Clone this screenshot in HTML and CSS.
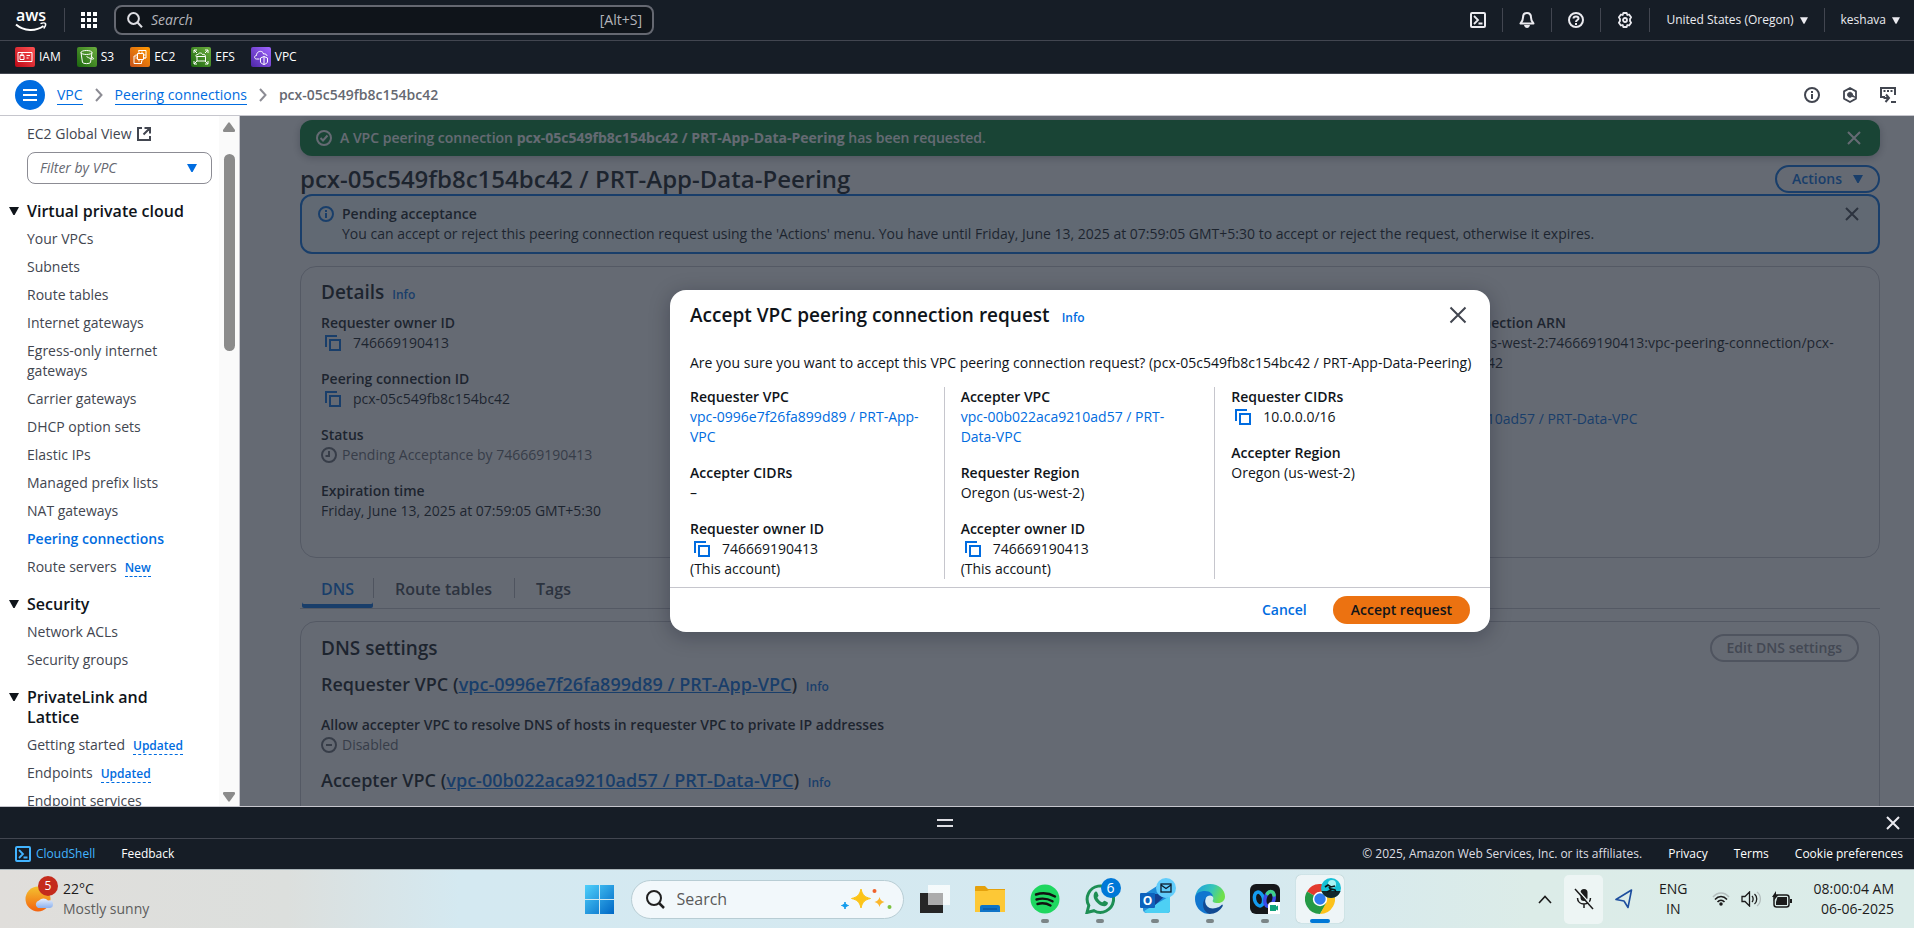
FILE: index.html
```html
<!DOCTYPE html>
<html lang="en">
<head>
<meta charset="utf-8">
<title>Peering connections | VPC Console</title>
<link rel="stylesheet" href="styles.css">
</head>
<body>
<svg class="sprite" aria-hidden="true">
  <symbol id="i-close" viewBox="0 0 16 16"><path d="m2 2 12 12M14 2 2 14" fill="none" stroke="currentColor" stroke-width="2"/></symbol>
  <symbol id="i-copy" viewBox="0 0 16 16"><path d="M1 12V1h11M5 5h10v10H5z" fill="none" stroke="currentColor" stroke-width="2"/></symbol>
  <symbol id="i-caret" viewBox="0 0 10 8"><path d="M0 0h10L5.600 8H4.400z" fill="currentColor"/></symbol>
  <symbol id="i-info" viewBox="0 0 16 16"><circle cx="8" cy="8" r="7" fill="none" stroke="currentColor" stroke-width="2"/><path d="M8 7v5M8 4v2" stroke="currentColor" stroke-width="2"/></symbol>
  <symbol id="i-shell" viewBox="0 0 16 16"><rect x="1" y="1" width="14" height="14" rx="1" fill="none" stroke="currentColor" stroke-width="2"/><path d="m4 4 4 4-4 4M8.500 11.500h4" fill="none" stroke="currentColor" stroke-width="1.800"/></symbol>
  <symbol id="i-chev" viewBox="0 0 8 14"><path d="m1 1 5.500 6L1 13" fill="none" stroke="currentColor" stroke-width="2"/></symbol>
  <symbol id="i-search" viewBox="0 0 16 16"><circle cx="6.500" cy="6.500" r="5.400" fill="none" stroke="currentColor" stroke-width="2"/><path d="m10.300 10.300 4.700 5" stroke="currentColor" stroke-width="2"/></symbol>
</svg>

<header class="topbar">
  <div class="topbar-row">
    <a class="logo" href="#" aria-label="AWS home">
      <svg width="32" height="26" viewBox="0 -2 32 26"><text x="16" y="12" text-anchor="middle" class="logo-text">aws</text><path d="M1 15.500c8 7 20 7 27.500 1.500" fill="none" stroke="#fff" stroke-width="2"/><path d="M25.500 14.600c2-.9 4.500-.9 5 0 .4 1.200-.5 3.400-1.800 4.900" fill="none" stroke="#fff" stroke-width="1.500"/></svg>
    </a>
    <span class="vrule"></span>
    <button class="icon-btn apps" aria-label="Services"><svg width="18" height="16" viewBox="0 0 18 16" fill="#fff"><path d="M1 0h4v4H1zM7 0h4v4H7zM13 0h4v4h-4zM1 6h4v4H1zM7 6h4v4H7zM13 6h4v4h-4zM1 12h4v4H1zM7 12h4v4H7zM13 12h4v4h-4z"/></svg></button>
    <label class="topsearch">
      <svg width="16" height="16"><use href="#i-search"/></svg>
      <input type="text" placeholder="Search" aria-label="Search">
      <span>[Alt+S]</span>
    </label>
    <div class="topright">
      <button class="icon-btn" aria-label="CloudShell"><svg width="16" height="16"><use href="#i-shell"/></svg></button>
      <span class="vrule"></span>
      <button class="icon-btn" aria-label="Notifications"><svg width="16" height="16" viewBox="0 0 16 16"><path d="M8 1C5.200 1 4 3 4 5.500 4 8.500 3 9.500 1.500 11.500h13C13 9.500 12 8.500 12 5.500 12 3 10.800 1 8 1z" fill="none" stroke="currentColor" stroke-width="2" stroke-linejoin="round"/><path d="M5 13h6c-.5 2-1.500 3-3 3s-2.500-1-3-3z" fill="currentColor"/></svg></button>
      <span class="vrule"></span>
      <button class="icon-btn" aria-label="Help"><svg width="16" height="16" viewBox="0 0 16 16" fill="none" stroke="currentColor" stroke-width="2"><circle cx="8" cy="8" r="7"/><path d="M5.500 6.500C5.500 5 6.500 4.400 8 4.400s2.500.8 2.500 2.100C10.500 8 8 8 8 10M8 11v2"/></svg></button>
      <span class="vrule"></span>
      <button class="icon-btn" aria-label="Settings"><svg width="16" height="16" viewBox="0 0 16 16" fill="none" stroke="currentColor" stroke-width="1.800"><path d="M6.300 1h3.400l.6 2 1.800-.5 2 2.800L13 7v2l1.100 1.700-2 2.800-1.800-.5-.6 2H6.300l-.6-2-1.800.5-2-2.800L3 9V7L1.900 5.300l2-2.800 1.800.5z" stroke-linejoin="round"/><circle cx="8" cy="8" r="2"/></svg></button>
      <span class="vrule"></span>
      <button class="menu-btn">United States (Oregon) <svg width="8" height="7"><use href="#i-caret"/></svg></button>
      <span class="vrule"></span>
      <button class="menu-btn">keshava <svg width="8" height="7"><use href="#i-caret"/></svg></button>
    </div>
  </div>
  <nav class="favorites" aria-label="Favorites">
    <a href="#"><svg class="iam" viewBox="0 0 20 20"><path d="M3 5.500h14v9H3zM5 8.500h4v4H5zM6 8.500V7h2v1.500M11.500 8.500H15M11.500 11h2"/></svg>IAM</a>
    <a href="#"><svg class="s3" viewBox="0 0 20 20"><ellipse cx="9.500" cy="5.500" rx="5.500" ry="2"/><path d="m4 5.500 1.500 10c1 1.500 7 1.500 8 0L15 5.500M9.500 9.500c3 2 6 3 7 2.500.5-.8-1-1.800-2.500-2.600"/></svg>S3</a>
    <a href="#"><svg class="ec2" viewBox="0 0 20 20"><path d="M7.500 6.500h6v6h-6zM9 4.500v2M12 4.500v2M9 12.500v2M12 12.500v2M5.500 8h2M5.500 11h2M13.500 8h2M13.500 11h2M8.500 4.500V3.500H16V11h-2M6.500 9H4v7.500h7.500V14"/></svg>EC2</a>
    <a href="#"><svg class="s3" viewBox="0 0 20 20"><path d="M3 6V3h3M14 3h3v3M17 14v3h-3M6 17H3v-3M3 3l3 3M17 3l-3 3M17 17l-3-3M3 17l3-3M6 14h8.500V9.500H6zM6 10c-2-.5-1-3 1-2.500.5-2 4-2 4.500 0 2-.5 3 .5 3 2"/></svg>EFS</a>
    <a href="#"><svg class="vpc" viewBox="0 0 20 20"><path d="M8.500 12H5.500C3 12 3 8.500 5.500 8.500 5.500 3.500 12 3 12.500 7c2-.5 3.500.5 3.500 2M13 9.500l3.500 1.500v4c0 1-2 2-3.500 2.500-1.500-.5-3.500-1.500-3.500-2.500v-4zM13 9.500v8"/></svg>VPC</a>
  </nav>
</header>

<div class="crumbbar">
  <button class="burger" aria-label="Open navigation"><svg width="14" height="12" viewBox="0 0 14 12"><path d="M0 1h14M0 6h14M0 11h14" stroke="#fff" stroke-width="2"/></svg></button>
  <nav class="crumbs" aria-label="Breadcrumbs">
    <a href="#">VPC</a><svg width="8" height="14"><use href="#i-chev"/></svg>
    <a href="#">Peering connections</a><svg width="8" height="14"><use href="#i-chev"/></svg>
    <b>pcx-05c549fb8c154bc42</b>
  </nav>
  <div class="crumb-tools">
    <button class="icon-btn" aria-label="Info panel"><svg width="16" height="16"><use href="#i-info"/></svg></button>
    <button class="icon-btn" aria-label="Diagnostics"><svg width="16" height="16" viewBox="0 0 16 16"><path d="M8 1l6 3.400v7.200L8 15l-6-3.400V4.400z" fill="none" stroke="currentColor" stroke-width="1.800" stroke-linejoin="round"/><path d="M9.500 9.800A2.500 2.500 0 1 1 10.500 8l3.500 3" fill="currentColor" stroke="currentColor" stroke-width="1"/></svg></button>
    <button class="icon-btn" aria-label="Open in CloudShell"><svg width="16" height="16" viewBox="0 0 16 16" fill="none" stroke="currentColor" stroke-width="2"><path d="M5 10H1V1h14v7M3.500 4h2M7 4h2M10.500 4h2M3.500 11H9M6 7.500 9 11l-3.500 4M11 15h5"/></svg></button>
  </div>
</div>

<div class="workspace">
  <aside class="sidebar">
    <nav class="sidenav" aria-label="VPC">
      <a href="#" class="ext">EC2 Global View <svg width="14" height="14" viewBox="0 0 14 14" fill="none" stroke="currentColor" stroke-width="2"><path d="M5 1H1v12h12V9M7.500 1H13v5.500M13 1 6.500 7.500"/></svg></a>
      <div class="filter"><select aria-label="Filter by VPC"><option>Filter by VPC</option></select><svg width="10" height="8"><use href="#i-caret"/></svg></div>
      <section>
        <button class="group"><svg width="10" height="8"><use href="#i-caret"/></svg>Virtual private cloud</button>
        <ul>
          <li><a href="#">Your VPCs</a></li>
          <li><a href="#">Subnets</a></li>
          <li><a href="#">Route tables</a></li>
          <li><a href="#">Internet gateways</a></li>
          <li><a href="#">Egress-only internet gateways</a></li>
          <li><a href="#">Carrier gateways</a></li>
          <li><a href="#">DHCP option sets</a></li>
          <li><a href="#">Elastic IPs</a></li>
          <li><a href="#">Managed prefix lists</a></li>
          <li><a href="#">NAT gateways</a></li>
          <li><a href="#" class="current">Peering connections</a></li>
          <li><a href="#">Route servers</a><button class="tag">New</button></li>
        </ul>
      </section>
      <section>
        <button class="group"><svg width="10" height="8"><use href="#i-caret"/></svg>Security</button>
        <ul>
          <li><a href="#">Network ACLs</a></li>
          <li><a href="#">Security groups</a></li>
        </ul>
      </section>
      <section>
        <button class="group"><svg width="10" height="8"><use href="#i-caret"/></svg>PrivateLink and Lattice</button>
        <ul>
          <li><a href="#">Getting started</a><button class="tag">Updated</button></li>
          <li><a href="#">Endpoints</a><button class="tag">Updated</button></li>
          <li><a href="#">Endpoint services</a></li>
        </ul>
      </section>
    </nav>
    <div class="scrollbar" aria-hidden="true">
      <svg width="12" height="10" viewBox="0 0 12 10"><path d="M5 1Q6-.3 7 1l5 7q.2 2-1 2H1Q-.2 10 0 8z" fill="#8b8b8b"/></svg>
      <div class="track"><div class="thumb"></div></div>
      <svg width="12" height="10" viewBox="0 0 12 10"><path d="M5 9q1 1.300 2 0l5-7q.2-2-1-2H1Q-.2 0 0 2z" fill="#8b8b8b"/></svg>
    </div>
  </aside>

  <div class="stage">
    <main class="content">
      <div class="flash">
        <svg width="16" height="16" viewBox="0 0 16 16" fill="none" stroke="currentColor" stroke-width="2"><circle cx="8" cy="8" r="7"/><path d="m4.500 8 2.500 2.500L11.500 5.500"/></svg>
        <p>A VPC peering connection <b>pcx-05c549fb8c154bc42 / PRT-App-Data-Peering</b> has been requested.</p>
        <button class="icon-btn" aria-label="Dismiss"><svg width="16" height="16"><use href="#i-close"/></svg></button>
      </div>
      <div class="titlebar">
        <h1>pcx-05c549fb8c154bc42 / PRT-App-Data-Peering</h1>
        <button class="pill">Actions <svg width="10" height="8"><use href="#i-caret"/></svg></button>
      </div>
      <div class="alert">
        <svg class="blue" width="16" height="16"><use href="#i-info"/></svg>
        <div><b>Pending acceptance</b><p>You can accept or reject this peering connection request using the 'Actions' menu. You have until Friday, June 13, 2025 at 07:59:05 GMT+5:30 to accept or reject the request, otherwise it expires.</p></div>
        <button class="icon-btn" aria-label="Dismiss"><svg width="16" height="16"><use href="#i-close"/></svg></button>
      </div>
      <section class="card">
        <div class="card-head"><h2>Details</h2><a class="info" href="#">Info</a></div>
        <div class="details">
          <dl>
            <div><dt>Requester owner ID</dt><dd class="copy"><button aria-label="Copy"><svg width="16" height="16"><use href="#i-copy"/></svg></button>746669190413</dd></div>
            <div><dt>Peering connection ID</dt><dd class="copy"><button aria-label="Copy"><svg width="16" height="16"><use href="#i-copy"/></svg></button>pcx-05c549fb8c154bc42</dd></div>
            <div><dt>Status</dt><dd class="status"><svg width="16" height="16" viewBox="0 0 16 16" fill="none" stroke="currentColor" stroke-width="2"><circle cx="8" cy="8" r="7"/><path d="M8 4v5H4.500"/></svg>Pending Acceptance by 746669190413</dd></div>
            <div><dt>Expiration time</dt><dd>Friday, June 13, 2025 at 07:59:05 GMT+5:30</dd></div>
          </dl>
          <dl></dl>
          <dl>
            <div><dt>VPC peering connection ARN</dt><dd class="arn"><button aria-label="Copy"><svg width="16" height="16"><use href="#i-copy"/></svg></button>arn:aws:ec2:us-west-2:746669190413:vpc-peering-connection/pcx-05c549fb8c154bc42</dd></div>
            <div><dt>Accepter VPC</dt><dd><a href="#">vpc-00b022aca9210ad57 / PRT-Data-VPC</a></dd></div>
            <div><dt>Accepter CIDRs</dt><dd>–</dd></div>
            <div><dt>Accepter Region</dt><dd>Oregon</dd></div>
          </dl>
        </div>
      </section>
      <div class="tabs" role="tablist">
        <button role="tab" aria-selected="true">DNS</button>
        <button role="tab" aria-selected="false">Route tables</button>
        <button role="tab" aria-selected="false">Tags</button>
      </div>
      <section class="card dns">
        <div class="card-head"><h2>DNS settings</h2><button class="pill" disabled>Edit DNS settings</button></div>
        <h3>Requester VPC (<a href="#">vpc-0996e7f26fa899d89 / PRT-App-VPC</a>) <a class="info" href="#">Info</a></h3>
        <dl><dt>Allow accepter VPC to resolve DNS of hosts in requester VPC to private IP addresses</dt><dd class="status"><svg width="16" height="16" viewBox="0 0 16 16" fill="none" stroke="currentColor" stroke-width="2"><circle cx="8" cy="8" r="7"/><path d="M5 8h6"/></svg>Disabled</dd></dl>
        <h3>Accepter VPC (<a href="#">vpc-00b022aca9210ad57 / PRT-Data-VPC</a>) <a class="info" href="#">Info</a></h3>
      </section>
    </main>

    <div class="overlay">
      <div class="modal" role="dialog" aria-labelledby="modal-title">
        <div class="modal-head">
          <h2 id="modal-title">Accept VPC peering connection request</h2><a class="info" href="#">Info</a>
          <button class="icon-btn" aria-label="Close"><svg width="18" height="18" viewBox="0 0 18 18"><path d="m1.500 1.500 15 15M16.500 1.500l-15 15" stroke="currentColor" stroke-width="2"/></svg></button>
        </div>
        <div class="modal-body">
          <p>Are you sure you want to accept this VPC peering connection request? (pcx-05c549fb8c154bc42 / PRT-App-Data-Peering)</p>
          <div class="modal-cols">
            <dl>
              <div><dt>Requester VPC</dt><dd><a href="#">vpc-0996e7f26fa899d89 / PRT-App-VPC</a></dd></div>
              <div><dt>Accepter CIDRs</dt><dd>–</dd></div>
              <div><dt>Requester owner ID</dt><dd class="copy"><button aria-label="Copy"><svg width="16" height="16"><use href="#i-copy"/></svg></button>746669190413</dd><dd>(This account)</dd></div>
            </dl>
            <dl>
              <div><dt>Accepter VPC</dt><dd><a href="#">vpc-00b022aca9210ad57 / PRT-Data-VPC</a></dd></div>
              <div><dt>Requester Region</dt><dd>Oregon (us-west-2)</dd></div>
              <div><dt>Accepter owner ID</dt><dd class="copy"><button aria-label="Copy"><svg width="16" height="16"><use href="#i-copy"/></svg></button>746669190413</dd><dd>(This account)</dd></div>
            </dl>
            <dl>
              <div><dt>Requester CIDRs</dt><dd class="copy"><button aria-label="Copy"><svg width="16" height="16"><use href="#i-copy"/></svg></button>10.0.0.0/16</dd></div>
              <div><dt>Accepter Region</dt><dd>Oregon (us-west-2)</dd></div>
            </dl>
          </div>
        </div>
        <div class="modal-foot">
          <button class="text-btn">Cancel</button>
          <button class="primary">Accept request</button>
        </div>
      </div>
    </div>
  </div>
</div>

<div class="drawer">
  <svg width="16" height="8" viewBox="0 0 16 8"><path d="M0 1h16M0 7h16" stroke="#dedee3" stroke-width="2"/></svg>
  <button class="icon-btn" aria-label="Close panel"><svg width="16" height="16"><use href="#i-close"/></svg></button>
</div>
<footer class="footer">
  <button class="shell"><svg width="16" height="16"><use href="#i-shell"/></svg>CloudShell</button>
  <a href="#">Feedback</a>
  <span class="copyright">© 2025, Amazon Web Services, Inc. or its affiliates.</span>
  <a href="#">Privacy</a>
  <a href="#">Terms</a>
  <a href="#">Cookie preferences</a>
</footer>

<div class="taskbar">
  <div class="weather">
    <div class="weather-icon">
      <svg width="30" height="30" viewBox="0 0 30 30"><defs><linearGradient id="sun" x2="0" y2="1"><stop stop-color="#f3c230"/><stop offset="1" stop-color="#f4620f"/></linearGradient><linearGradient id="cloud" x2="0" y2="1"><stop stop-color="#e8f0fd"/><stop offset="1" stop-color="#8db2ee"/></linearGradient></defs><circle cx="13" cy="15" r="12.500" fill="url(#sun)"/><path d="M13 24a4 4 0 0 1 1-7.500 6 6 0 0 1 9 0q5-1 5 4 0 3-3 3.500z" fill="url(#cloud)"/></svg>
      <span class="badge">5</span>
    </div>
    <div><div>22°C</div><div class="muted">Mostly sunny</div></div>
  </div>
  <div class="apps-row">
    <button class="app" aria-label="Start"><svg width="30" height="30" viewBox="0 0 30 30"><defs><linearGradient id="win" x2="1" y2="1"><stop stop-color="#4fd0fb"/><stop offset="1" stop-color="#0067c5"/></linearGradient></defs><path fill="url(#win)" d="M0 1h14v14H0zM15 1h14v14H15zM0 16h14v14H0zM15 16h14v14H15z"/></svg></button>
    <label class="tasksearch"><svg width="19" height="19" viewBox="0 0 19 19" fill="none" stroke="#202020" stroke-width="2"><circle cx="8" cy="8" r="7"/><path d="m13 13 5 5" stroke-width="2.500"/></svg><input type="text" placeholder="Search" aria-label="Search Windows">
      <svg width="52" height="26" viewBox="0 0 52 26"><path d="M20 3c1.500 6 3.500 8 9.500 9.500C23.500 14 21.500 16 20 22c-1.500-6-3.500-8-9.500-9.500C16.500 11 18.500 9 20 3z" fill="#fcc419" stroke="#fcc419" stroke-linejoin="round"/><path d="M38.500 11c.8 3 2 4.200 5 5-3 .8-4.200 2-5 5-.8-3-2-4.200-5-5 3-.8 4.200-2 5-5z" fill="#fbb62c"/><path d="M4 16c.6 2.200 1.300 3 3.500 3.500C5.300 20 4.600 20.800 4 23 3.400 20.800 2.700 20 .5 19.500 2.700 19 3.400 18.200 4 16z" fill="#149ded" stroke="#149ded"/><circle cx="33.500" cy="5" r="2" fill="#f0622d"/><circle cx="48.500" cy="21" r="2" fill="#7cc23f"/></svg></label>
    <button class="app" aria-label="Task view"><svg width="30" height="30" viewBox="0 0 30 30"><path d="M0 9h23v20H0z" fill="#262626"/><path d="M8 1h22v20H8z" fill="#fff" fill-opacity=".75"/><path d="M8 9h15v12H8z" fill="#999" fill-opacity=".6"/></svg></button>
    <button class="app" aria-label="File Explorer"><svg width="30" height="30" viewBox="0 0 30 30"><path d="M0 3q0-1 1-1h9l3 3h17v5H0z" fill="#e5a10c"/><path d="M0 7h12l2-1h16v22H0z" fill="#fdc836"/><path d="M5 28v-5q0-2 2-2h16q2 0 2 2v5z" fill="#0f74c8"/><path d="M8 25h14" stroke="#0a4a92"/></svg></button>
    <button class="app run" aria-label="Spotify"><svg width="30" height="30" viewBox="0 0 30 30"><circle cx="15" cy="15" r="14.500" fill="#1ed760"/><path d="M6 10.500c6-2 13-1.500 19 2M6.500 15.500c5.500-1.500 11-1 16 1.800M7.500 20c4.500-1.200 9-.8 13 1.500" fill="none" stroke="#111" stroke-width="2.400" stroke-linecap="round"/></svg></button>
    <button class="app run" aria-label="WhatsApp"><svg width="30" height="30" viewBox="0 0 30 30"><path d="M2 28.500 3.800 21.500A13.200 13.200 0 1 1 9 26.700z" fill="none" stroke="#1e8f55" stroke-width="3"/><path d="M9.500 8.500c1-1.500 2.500-1 3 .5l1 2.500c0 1-1.500 1.800-1 2.500 1 2 2.500 3.300 4.500 4.200 1 .4 1.700-1.700 2.600-1.400l3 1.500c1 1-.5 3.700-3 4-4 .3-11-5-11-10 0-1.500.3-3 .9-3.800z" fill="#1e8f55"/></svg><span class="badge six">6</span></button>
    <button class="app run" aria-label="Outlook"><svg width="30" height="30" viewBox="0 0 30 30"><path d="M3 11 17 2l13 9v15q0 3-3 3H7q-4 0-4-4z" fill="#1f8bd8"/><path d="M4 27 30 12v14q0 3-3 3H7q-2 0-3-2z" fill="#4dd0f4"/><path d="M9 10h18L13 23z" fill="#123f91"/><rect y="9" width="15" height="15" rx="1" fill="#0d62bd"/><text x="7.500" y="21" text-anchor="middle" class="o-text">O</text></svg><span class="badge mail"><svg width="12" height="10" viewBox="0 0 12 10" fill="none" stroke="#0b1b2b" stroke-width="1.300"><rect x="1" y="1" width="10" height="8"/><path d="m1 2 5 3.500L11 2"/></svg></span></button>
    <button class="app run" aria-label="Edge"><svg width="30" height="30" viewBox="0 0 30 30"><defs><linearGradient id="edge" x2="1" y2=".3"><stop stop-color="#1b9de2"/><stop offset=".6" stop-color="#36c6b8"/><stop offset="1" stop-color="#6fe04b"/></linearGradient></defs><path d="M0 14C1 5 7 0 15 0c9 0 15 6 15 12.500 0 4-3 6.500-7 6.500-5 0-6-1.500-5-3 1-2 0-5-4-5C8 10 3 11 0 14z" fill="url(#edge)"/><path d="M0 15c0-6 5-8 10-8 5 0 8 3 8 6-1-2-6-2.500-7.500 2C9 21 14 26 20 26c-2 3-5 4-8 3.700C5 29 0 22 0 15z" fill="#1176cf"/><path d="M10.500 14C8 21 14 26 21 24c4-1 5-2.500 6-3.500 1 0 1 1 .5 2C25 27 20 30 14.500 30 8 28 6 19 10.500 14z" fill="#124a92"/></svg></button>
    <button class="app run" aria-label="Webex"><svg width="30" height="30" viewBox="0 0 30 30"><rect width="30" height="30" rx="6" fill="#15171a"/><ellipse cx="9" cy="15" rx="4.500" ry="7" fill="none" stroke="#149cf0" stroke-width="3.500" transform="rotate(-14 9 15)"/><ellipse cx="19.500" cy="15" rx="4.500" ry="7.500" fill="none" stroke="#3a4ce8" stroke-width="3.500" transform="rotate(14 19.500 15)"/><path d="M17.500 9.500c2-3 6-2.500 6.500 1.500" fill="none" stroke="#3fd28a" stroke-width="3.500" stroke-linecap="round"/><path d="M18 22q0-4 4-4h8v12H18z" fill="#fff"/><path d="M20 21h6v1.500l2-1v5l-2-1V27h-6z" fill="#10a17b"/></svg></button>
    <button class="app active" aria-label="Chrome"><svg width="30" height="30" viewBox="0 0 30 30"><path d="M15 15 2 7.500A15 15 0 0 1 28 7.500z" fill="#e33b2e"/><path d="M15 15 2 7.500A15 15 0 0 0 15 30l7-11z" fill="#249a46"/><path d="M15 15l6 4-6 11A15 15 0 0 0 28 7.500H15z" fill="#fcc21b"/><circle cx="15" cy="15" r="7.200" fill="#fff"/><circle cx="15" cy="15" r="5.700" fill="#2f7bf0"/></svg><span class="badge avatar"><svg width="20" height="20" viewBox="0 0 20 20"><circle cx="10" cy="10" r="10" fill="#17c0d6"/><circle cx="11" cy="6" r="4" fill="#a8f3f5"/><path d="M.5 13h19A10 10 0 0 1 .5 13z" fill="#10262c"/><path d="m4 9 3-2 3 2 4-1M8 9l2 3-4 2M10 11l4 1 1 2" fill="none" stroke="#0a1518" stroke-width="1.600"/></svg></span></button>
  </div>
  <div class="tray">
    <button class="icon-btn" aria-label="Hidden icons"><svg width="14" height="9" viewBox="0 0 14 9"><path d="m1 8 6-6.500L13 8" fill="none" stroke="#1b1b1b" stroke-width="1.600"/></svg></button>
    <button class="mic" aria-label="Microphone muted"><svg width="20" height="22" viewBox="0 0 20 22"><rect x="6.500" y="1" width="7" height="12" rx="3.500" fill="#1b1b1b"/><path d="M3.500 10c0 8 13 8 13 0M10 16v4" fill="none" stroke="#1b1b1b" stroke-width="1.500"/><path d="m2 0 18 20" stroke="#edf5f4" stroke-width="1.500"/><path d="m1 1 18 20" stroke="#1b1b1b" stroke-width="1.500"/></svg></button>
    <button class="icon-btn" aria-label="Location"><svg width="18" height="20" viewBox="0 0 18 20"><path d="M16.500 1 1 10.500l8 1.500 4 6.500z" fill="none" stroke="#1d4e9e" stroke-width="1.600" stroke-linejoin="round"/></svg></button>
    <div class="lang"><div>ENG</div><div>IN</div></div>
    <div class="net">
      <svg width="18" height="16" viewBox="0 0 18 16" fill="none" stroke="#1b1b1b" stroke-width="1.500"><path d="M1 6c4.500-5.500 11.500-5.500 16 0" stroke="#b4bebe"/><path d="M3 8.500c3.500-4 8.500-4 12 0M5.500 11c2-2.500 5-2.500 7 0"/><circle cx="9" cy="13" r="1" fill="#1b1b1b"/></svg>
      <svg width="20" height="16" viewBox="0 0 20 16" fill="none" stroke="#1b1b1b" stroke-width="1.300"><path d="M1 5.500h3L8.500 1v14L4 10.500H1zM11 5c1.500 1.500 1.500 4.500 0 6M13.500 3c3 2.500 3 7.500 0 10"/><path d="M16 1c4.500 3.500 4.500 10.500 0 14" stroke="#b4bebe"/></svg>
      <svg width="20" height="17" viewBox="0 0 20 17"><rect x="2" y="4" width="15" height="12" rx="2.500" fill="none" stroke="#1b1b1b" stroke-width="1.500"/><path d="M5.500 6H15v8H4v-3zM18 8h2v4h-2zM4 0 0 6h2.500L1.500 10 6.500 4H4z" fill="#1b1b1b"/></svg>
    </div>
    <div class="clock"><div>08:00:04 AM</div><div>06-06-2025</div></div>
  </div>
</div>
</body>
</html>
```

FILE: styles.css
```css
* { box-sizing: border-box; margin: 0; padding: 0; }
body { height: 100vh; display: flex; flex-direction: column; overflow: hidden; font: 14px/20px "Open Sans", "Noto Sans", sans-serif; color: #0f141a; background: #fff; }
button, input, select { font: inherit; color: inherit; background: none; border: 0; }
button { cursor: pointer; }
ul { list-style: none; }
svg { flex: none; }
a { color: #006ce0; text-decoration: none; }
b, dt, h1, h2, h3 { font-weight: 600; }
.sprite { position: absolute; width: 0; height: 0; }
.icon-btn { display: flex; align-items: center; justify-content: center; }

.topbar { background: #161d26; color: #fff; flex: none; }
.topbar-row { display: flex; align-items: center; height: 41px; padding: 0 14px 0 15px; border-bottom: 1px solid #424650; }
.logo { display: flex; width: 33px; }
.logo svg { overflow: visible; }
.logo-text { font: 600 16px "Open Sans", sans-serif; fill: #fff; }
.vrule { width: 1px; height: 24px; background: #424650; }
.logo + .vrule { margin-left: 16px; }
.apps { margin: 0 16px 0 15px; }
.topsearch { display: flex; align-items: center; gap: 8px; width: 540px; height: 30px; padding: 0 10px 0 11px; border: 2px solid #656871; border-radius: 8px; background: #0f141a; color: #dedee3; }
.topsearch input { flex: 1; min-width: 0; outline: 0; }
.topsearch input::placeholder { font-style: italic; color: #b4b4bb; opacity: 1; }
.topsearch span { color: #b4b4bb; }
.topright { margin-left: auto; display: flex; align-items: center; gap: 16px; font-size: 12px; font-weight: 500; color: #ebebf0; }
.topright .menu-btn { display: flex; align-items: center; gap: 6px; }
.favorites { display: flex; gap: 16px; height: 33px; padding: 0 15px; align-items: center; border-bottom: 1px solid #424650; }
.favorites a { display: flex; align-items: center; gap: 4px; color: #fff; font-size: 12px; font-weight: 500; }
.favorites svg { width: 20px; height: 20px; border-radius: 2px; fill: none; stroke: #fff; }
.iam { background: linear-gradient(45deg, #bd0816, #ff5252); }
.s3 { background: linear-gradient(45deg, #1b660f, #6cae3e); }
.ec2 { background: linear-gradient(45deg, #c8511b, #ff9900); }
.vpc { background: linear-gradient(45deg, #4d27a8, #a166ff); }

.crumbbar { display: flex; align-items: center; height: 42px; flex: none; padding: 0 18px 0 15px; border-bottom: 1px solid #c6c6cd; color: #424650; }
.burger { width: 30px; height: 30px; border-radius: 50%; background: #006ce0; display: flex; align-items: center; justify-content: center; }
.crumbs { display: flex; align-items: center; gap: 12px; margin-left: 12px; }
.crumbs a { padding-top: 1px; border-bottom: 1px solid #006ce0; line-height: 18px; }
.crumbs svg { color: #8c8c94; }
.crumbs b { color: #656871; }
.crumb-tools { margin-left: auto; display: flex; gap: 22px; }

.workspace { flex: 1; min-height: 0; display: flex; }
.sidebar { width: 240px; flex: none; display: flex; border-right: 1px solid #c6c6cd; overflow: hidden; }
.sidenav { flex: 1; padding: 8px 7px 0 27px; overflow: hidden; }
.sidenav a { color: #424650; }
.sidenav a.current { color: #006ce0; font-weight: 600; }
.ext { display: flex; align-items: center; gap: 6px; }
.filter { position: relative; margin-top: 8px; }
.filter select { appearance: none; width: 100%; height: 32px; padding: 0 12px; border: 1px solid #8c8c94; border-radius: 8px; font-style: italic; color: #656871; background: #fff; }
.filter svg { position: absolute; right: 15px; top: 12px; color: #006ce0; pointer-events: none; }
.sidenav section { margin-top: 17px; }
.group { display: flex; align-items: flex-start; gap: 8px; margin-left: -18px; width: 182px; font-size: 16px; font-weight: 600; text-align: left; }
.group svg { margin-top: 6px; }
.sidenav ul { display: flex; flex-direction: column; gap: 8px; margin-top: 8px; }
.sidenav li { width: 160px; white-space: normal; }
.tag { margin-left: 8px; font-size: 12px; line-height: 16px; font-weight: 600; color: #006ce0; border-bottom: 1px dashed #006ce0; }
.sidenav li:has(.tag) { width: auto; height: 20px; white-space: nowrap; }
.scrollbar { width: 20px; background: #fafafa; display: flex; flex-direction: column; align-items: center; gap: 22px; padding: 6px 0 4px; }
.track { flex: 1; }
.thumb { width: 11px; height: 32%; border-radius: 6px; background: #8b8b8b; }

.stage { flex: 1; min-width: 0; position: relative; overflow: hidden; }
.content { padding: 4px 34px 0 60px; }
.flash { display: flex; align-items: center; gap: 8px; height: 36px; padding: 0 18px 0 16px; border-radius: 12px; background: #00802f; color: #fff; font-weight: 600; box-shadow: 0 2px 8px rgba(0, 7, 22, .3); }
.flash b { font-weight: 700; }
.flash button, .alert button { margin-left: auto; }
.titlebar { display: flex; align-items: center; justify-content: space-between; height: 28px; margin-top: 9px; }
h1 { font-size: 24px; line-height: 28px; }
.pill { display: flex; align-items: center; gap: 11px; height: 28px; padding: 0 15px; border: 2px solid #006ce0; border-radius: 14px; color: #006ce0; font-weight: 600; }
.pill:disabled { border-color: #b4b4bb; color: #8c8c94; }
.alert { display: flex; gap: 8px; margin-top: 1px; padding: 8px 18px 8px 16px; border: 2px solid #006ce0; border-radius: 12px; background: #f0fbff; }
.alert > svg { margin-top: 2px; }
.alert button { align-self: flex-start; height: 20px; color: #424650; }
.blue { color: #006ce0; }
.card { margin-top: 12px; padding: 12px 20px 16px; border: 1px solid #c6c6cd; border-radius: 16px; background: #fff; }
.card-head { display: flex; align-items: baseline; gap: 8px; }
h2 { font-size: 19px; line-height: 26px; }
h3 { font-size: 18px; line-height: 24px; }
h3 a { text-decoration: underline; }
.info { font-size: 12px; line-height: 16px; font-weight: 600; text-decoration: none; }
h3 .info { margin-left: 4px; }
.details { display: grid; grid-template-columns: repeat(3, minmax(0, 1fr)); gap: 40px; margin-top: 8px; }
.details dl, .modal-cols dl { display: flex; flex-direction: column; gap: 16px; }
.copy { display: flex; align-items: center; gap: 12px; }
.copy button, .arn button { color: #006ce0; }
.copy button { display: flex; margin-left: 4px; }
.arn button { width: 28px; vertical-align: middle; height: 16px; margin-top: -2px; }
.status { display: flex; align-items: center; gap: 5px; color: #656871; }
.tabs { display: flex; margin-top: 12px; padding-left: 2px; border-bottom: 1px solid #c6c6cd; }
.tabs button { position: relative; height: 38px; padding: 0 22px; font-size: 16px; font-weight: 600; color: #424650; }
.tabs button:first-child { padding: 0 19px; }
.tabs button + button::before { content: ""; position: absolute; left: 0; top: 8px; height: 20px; border-left: 1px solid #b4b4bb; }
.tabs [aria-selected="true"] { color: #006ce0; border-radius: 2px; box-shadow: inset 0 -4px #006ce0; }
.dns { height: 300px; }
.dns .card-head { align-items: center; justify-content: space-between; }
.dns h3 { margin-top: 10px; }
.dns dl { margin: 19px 0 13px; }

.overlay { position: absolute; inset: 0; display: flex; align-items: center; justify-content: center; padding-left: 6px; background: rgba(35, 43, 55, .7); }
.modal { width: 820px; border-radius: 16px; background: #fff; box-shadow: 0 4px 20px 1px rgba(0, 7, 22, .25); }
.modal-head { display: flex; align-items: baseline; gap: 12px; padding: 12px 23px 0 20px; }
.modal-head .icon-btn { margin-left: auto; align-self: center; color: #424650; }
.modal-body { padding: 25px 20px 8px; }
.modal-body p { white-space: nowrap; }
.modal-cols { display: grid; grid-template-columns: repeat(3, minmax(0, 1fr)); gap: 32px; margin-top: 14px; }
.modal-cols dl + dl { border-left: 1px solid #c6c6cd; padding-left: 16px; margin-left: -17px; }
.modal-foot { display: flex; align-items: center; justify-content: flex-end; gap: 26px; padding: 8px 20px; border-top: 1px solid #c6c6cd; font-weight: 600; }
.text-btn { color: #006ce0; }
.primary { height: 28px; padding: 0 18px; border-radius: 14px; background: #ec7211; }

.drawer { flex: none; display: flex; align-items: center; justify-content: flex-end; height: 33px; padding: 0 13px 0 5px; background: #161d26; border-top: 1px solid #c6c6cd; border-bottom: 1px solid #424650; color: #ebebf0; }
.drawer > svg { margin: 0 auto; }
.footer { flex: none; display: flex; align-items: center; gap: 26px; height: 30px; padding: 0 11px 0 15px; background: #161d26; color: #dedee3; font-size: 12px; font-weight: 500; }
.footer a { color: #fff; }
.shell { display: flex; align-items: center; gap: 5px; color: #42b4ff; }
.copyright { margin-left: auto; }

.taskbar { flex: none; display: grid; grid-template-columns: 1fr auto 1fr; align-items: center; height: 59px; padding: 0 20px 0 25px; border-top: 1px solid #aab4b8; background: linear-gradient(90deg, #e0dedb, #dcdfdd 15%, #d4e9f1 24%, #d5e9f0 65%, #dcece8 80%, #dbece9); color: #1b1b1b; }
.weather { display: flex; align-items: center; gap: 8px; }
.weather-icon { position: relative; display: flex; }
.muted { color: #5d5d5d; }
.badge { position: absolute; right: -3px; top: -8px; width: 20px; height: 20px; border-radius: 50%; display: flex; align-items: center; justify-content: center; font-size: 12px; color: #fff; background: #c42b1c; }
.apps-row { display: flex; align-items: center; gap: 7px; }
.app { position: relative; width: 48px; height: 48px; border-radius: 5px; display: flex; align-items: center; justify-content: center; }
.app .badge { right: 3px; top: 3px; }
.six { background: #0078d7; font-size: 14px; }
.app .mail { background: #62cdfb; }
.app .avatar { background: none; }
.app .six { background: #0078d7; }
.o-text { font: 700 12px "Open Sans", sans-serif; fill: #fff; }
.run::after, .active::after { content: ""; position: absolute; bottom: 0; left: 20px; width: 8px; height: 4px; border-radius: 2px; background: #7b8587; }
.active { background: #eef5f7; box-shadow: 0 0 1px #8aa; }
.active::after { left: 14px; width: 20px; background: #0078d7; }
.tasksearch { display: flex; align-items: center; gap: 12px; width: 273px; height: 39px; padding: 0 10px 0 14px; border: 1px solid #b8cdd4; border-radius: 20px; background: #f2f8fb; font-size: 16px; }
.tasksearch input { flex: 1; min-width: 0; outline: 0; }
.tasksearch input::placeholder { color: #5a5a5a; opacity: 1; }
.tray { display: flex; align-items: center; justify-content: flex-end; gap: 12px; }
.mic { width: 39px; height: 49px; border-radius: 5px; display: flex; align-items: center; justify-content: center; background: #edf5f4; }
.lang { text-align: center; margin: 0 12px 0 14px; }
.net { display: flex; align-items: center; gap: 11px; margin-right: 10px; }
.clock { text-align: right; }
```
